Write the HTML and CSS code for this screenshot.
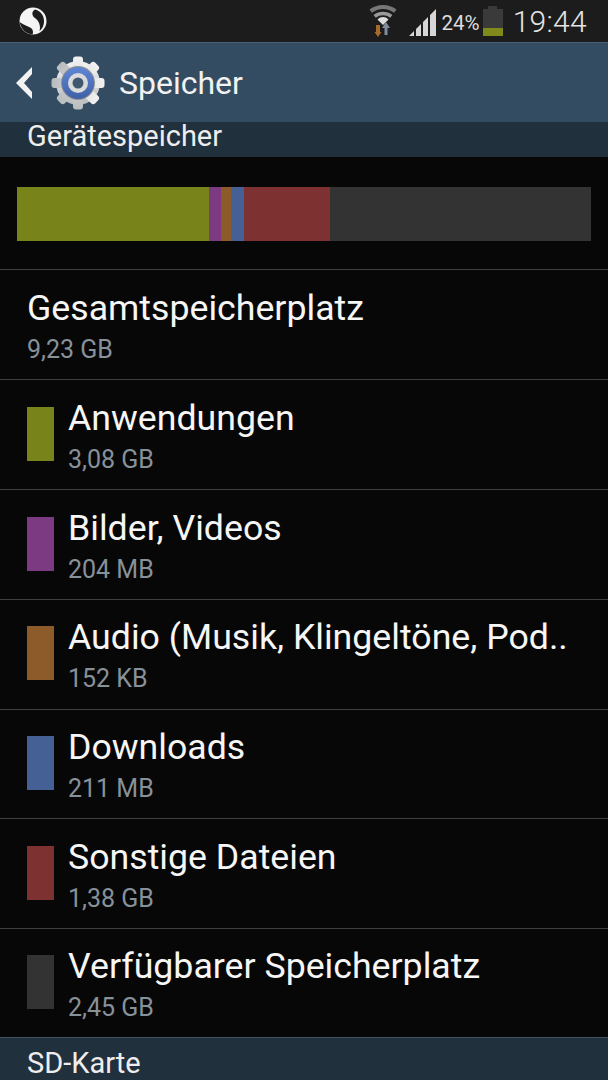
FILE: index.html
```html
<!DOCTYPE html>
<html lang="de">
<head>
    <meta charset="UTF-8">
    <meta name="viewport" content="width=device-width, initial-scale=1.0">
    <title>Speicher</title>
    <link rel="stylesheet" href="styles.css">
</head>
<body>
    <div class="screen">
        <!-- Statusleiste -->
        <div class="status-bar">
            <svg class="s-logo" width="30" height="30" viewBox="0 0 30 30">
                <circle cx="15" cy="15" r="13.500" fill="#f4f4f4"/>
                <path d="M17 3.500 C22 4.500 26 9 26 15 C26 20 24 23 21.500 25 C23 20 21 15 17 12 C14 10 13 6 17 3.500 Z" fill="#1c1c1c"/>
                <path d="M1.500 16 C6 19 10 20 13 22 C15 23.500 15.500 26 14.500 28.500 C8 28 3 23 1.500 16 Z" fill="#1c1c1c"/>
            </svg>
            <div class="status-right">
                <svg class="wifi" width="32" height="36" viewBox="0 0 32 36">
                    <path d="M5.700 8.200 A20 20 0 0 1 30.300 8.200" fill="none" stroke="#777777" stroke-width="4"/>
                    <path d="M9.700 13.400 A13.500 13.500 0 0 1 26.300 13.400" fill="none" stroke="#9a9a9a" stroke-width="3.500"/>
                    <path d="M18 22 L12.500 16.500 A7.500 7.500 0 0 1 23.500 16.500 Z" fill="#dddddd"/>
                    <path d="M19.500 32 V25 H17 L21 19 L25 25 H22.500 V32 Z" fill="#7f8e9a"/>
                    <path d="M11 22 H15 V29 H16.500 L13 34 L9.500 29 H11 Z" fill="#a86a2c"/>
                </svg>
                <svg class="signal" width="28" height="27" viewBox="0 0 28 27">
                    <path d="M0 27 L5 22 V27 Z M7 27 V20 L12 15 V27 Z M14 27 V13 L19 8 V27 Z M21 27 V6 L27 0 V27 Z" fill="#d6d6d6"/>
                </svg>
                <span class="battery-text">24%</span>
                <div class="battery">
                    <div class="battery-cap"></div>
                    <div class="battery-body"><div class="battery-level"></div></div>
                </div>
                <span class="clock">19:44</span>
            </div>
        </div>

        <!-- Titelleiste -->
        <div class="action-bar">
            <svg class="back" width="20" height="34" viewBox="0 0 20 34">
                <path d="M17 1 V8 L9 17 L17 26 V33 L1 17 Z" fill="#f2f2f2"/>
            </svg>
            <svg class="gear" width="54" height="54" viewBox="0 0 54 54">
                <defs>
                    <linearGradient id="steel" x1="0" y1="0" x2="0" y2="1">
                        <stop offset="0" stop-color="#f2f2f2"/>
                        <stop offset="1" stop-color="#b9bcbf"/>
                    </linearGradient>
                    <linearGradient id="ring" x1="0" y1="0" x2="0" y2="1">
                        <stop offset="0" stop-color="#5f86d6"/>
                        <stop offset="1" stop-color="#3f60a6"/>
                    </linearGradient>
                </defs>
                <g fill="url(#steel)">
                    <circle cx="27" cy="27" r="22"/>
                    <rect x="22" y="0.500" width="10" height="53" rx="3"/>
                    <rect x="22" y="0.500" width="10" height="53" rx="3" transform="rotate(45 27 27)"/>
                    <rect x="22" y="0.500" width="10" height="53" rx="3" transform="rotate(90 27 27)"/>
                    <rect x="22" y="0.500" width="10" height="53" rx="3" transform="rotate(135 27 27)"/>
                </g>
                <circle cx="27" cy="27" r="17" fill="#8d9094"/>
                <circle cx="27" cy="27" r="16" fill="url(#ring)"/>
                <circle cx="27" cy="27" r="10" fill="#d8dadc"/>
                <circle cx="27" cy="27" r="5.500" fill="#3f5870"/>
            </svg>
            <span class="action-title">Speicher</span>
        </div>

        <div class="section-header device-header">Gerätespeicher</div>

        <div class="usage-wrap">
            <div class="usage-bar">
                <div class="seg c-apps" style="width: 192px"></div>
                <div class="seg c-pics" style="width: 12px"></div>
                <div class="seg c-audio" style="width: 10px"></div>
                <div class="seg c-down" style="width: 13px"></div>
                <div class="seg c-misc" style="width: 86px"></div>
                <div class="seg c-free" style="width: 261px"></div>
            </div>
        </div>

        <div class="row">
            <div class="row-text">
                <div class="row-title">Gesamtspeicherplatz</div>
                <div class="row-sub">9,23 GB</div>
            </div>
        </div>
        <div class="row">
            <div class="swatch c-apps"></div>
            <div class="row-text">
                <div class="row-title">Anwendungen</div>
                <div class="row-sub">3,08 GB</div>
            </div>
        </div>
        <div class="row">
            <div class="swatch c-pics"></div>
            <div class="row-text">
                <div class="row-title">Bilder, Videos</div>
                <div class="row-sub">204 MB</div>
            </div>
        </div>
        <div class="row row-tight">
            <div class="swatch c-audio"></div>
            <div class="row-text">
                <div class="row-title">Audio (Musik, Klingeltöne, Pod..</div>
                <div class="row-sub">152 KB</div>
            </div>
        </div>
        <div class="row row-tight row-short">
            <div class="swatch c-down"></div>
            <div class="row-text">
                <div class="row-title">Downloads</div>
                <div class="row-sub">211 MB</div>
            </div>
        </div>
        <div class="row">
            <div class="swatch c-misc"></div>
            <div class="row-text">
                <div class="row-title">Sonstige Dateien</div>
                <div class="row-sub">1,38 GB</div>
            </div>
        </div>
        <div class="row row-tight row-last">
            <div class="swatch c-free"></div>
            <div class="row-text">
                <div class="row-title">Verfügbarer Speicherplatz</div>
                <div class="row-sub">2,45 GB</div>
            </div>
        </div>

        <div class="section-header sd-header">SD-Karte</div>
    </div>
</body>
</html>
```
FILE: styles.css
```css
* {
    margin: 0;
    padding: 0;
    box-sizing: border-box;
}

html, body {
    height: 100%;
    background: #070707;
}

body {
    font-family: Roboto, "Liberation Sans", sans-serif;
    color: #f5f5f5;
}

.screen {
    width: 608px;
    height: 1080px;
    overflow: hidden;
    display: flex;
    flex-direction: column;
}

.status-bar {
    flex: none;
    height: 42px;
    background: #1c1c1c;
    display: flex;
    align-items: center;
    justify-content: space-between;
    padding: 0 21px 0 18px;
}

.status-right {
    display: flex;
    align-items: center;
}

.wifi { margin-right: 12px; }
.signal { margin-right: 5px; margin-top: 2px; }

.battery-text {
    font-size: 20.5px;
    color: #dcdcdc;
    margin-right: 3px;
    margin-top: 3px;
}

.battery {
    width: 20px;
    margin-right: 10px;
}

.battery-cap {
    width: 9px;
    height: 3px;
    margin: 0 auto;
    background: #3a3a3a;
}

.battery-body {
    height: 27px;
    background: #3a3a3a;
    display: flex;
    align-items: flex-end;
}

.battery-level {
    width: 100%;
    height: 8px;
    background: #7f8a1a;
}

.clock {
    font-size: 30px;
    font-weight: 300;
    color: #e4e4e4;
    letter-spacing: 0.3px;
}

.action-bar {
    flex: none;
    height: 80px;
    background: #344c62;
    border-top: 1px solid #4a6075;
    display: flex;
    align-items: center;
    padding-left: 15px;
}

.back { margin-right: 16px; }
.gear { margin-right: 14px; }

.action-title {
    font-size: 32px;
    color: #f2f2f2;
}

.section-header {
    flex: none;
    background: #21303d;
    font-size: 29px;
    padding-left: 27px;
    color: #eeeeee;
}

.device-header {
    height: 35px;
    line-height: 28px;
}

.sd-header {
    height: 43px;
    line-height: 50px;
    border-top: 1px solid #44525e;
}

.usage-wrap {
    flex: none;
    height: 113px;
    padding: 30px 17px 0;
    border-bottom: 1px solid #3f3f3f;
}

.usage-bar {
    display: flex;
    height: 54px;
}

.seg { flex: none; }

.c-apps { background: #78831a; }
.c-pics { background: #7b3a82; }
.c-audio { background: #8d5a29; }
.c-down { background: #456095; }
.c-misc { background: #7e3131; }
.c-free { background: #333333; }

.row {
    flex: none;
    height: 110px;
    display: flex;
    align-items: center;
    padding: 0 0 1px 27px;
    border-bottom: 1px solid #3f3f3f;
}

.row-tight {
    padding-bottom: 3px;
}

.row-short {
    height: 109px;
}

.row-last {
    height: 108px;
    border-bottom: none;
}

.swatch {
    flex: none;
    width: 27px;
    height: 54px;
    margin-right: 14px;
}

.row-text {
    white-space: nowrap;
    padding-top: 6px;
}

.row-title {
    font-size: 35.7px;
    line-height: 40px;
    color: #f6f6f6;
    margin-bottom: 6px;
}

.row-sub {
    font-size: 25px;
    line-height: 32px;
    color: #87919a;
}
```
